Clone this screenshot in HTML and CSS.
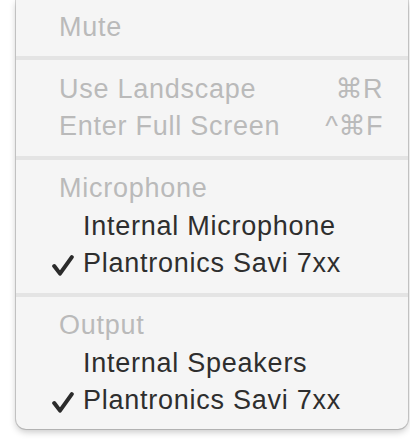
FILE: index.html
```html
<!DOCTYPE html>
<html>
<head>
<meta charset="utf-8">
<link rel="stylesheet" href="styles.css">
</head>
<body>
<div class="menu">
  <div class="row header">Mute</div>
  <div class="sep"></div>
  <div class="row header"><span class="label">Use Landscape</span><span class="key">⌘R</span></div>
  <div class="row header"><span class="label">Enter Full Screen</span><span class="key">^⌘F</span></div>
  <div class="sep"></div>
  <div class="row header">Microphone</div>
  <div class="row item"><span class="check"></span><span class="label">Internal Microphone</span></div>
  <div class="row item"><span class="check"><svg width="22" height="21" viewBox="0 0 22 21"><polyline points="2.2,11 8,18.6 19.8,2.2" fill="none" stroke="#2b2b2b" stroke-width="4" stroke-linecap="round" stroke-linejoin="round"/></svg></span><span class="label">Plantronics Savi 7xx</span></div>
  <div class="sep"></div>
  <div class="row header">Output</div>
  <div class="row item"><span class="check"></span><span class="label">Internal Speakers</span></div>
  <div class="row item"><span class="check"><svg width="22" height="21" viewBox="0 0 22 21"><polyline points="2.2,11 8,18.6 19.8,2.2" fill="none" stroke="#2b2b2b" stroke-width="4" stroke-linecap="round" stroke-linejoin="round"/></svg></span><span class="label">Plantronics Savi 7xx</span></div>
</div>
</body>
</html>
```
FILE: styles.css
```css
html, body {
  margin: 0;
  padding: 0;
  background: #ffffff;
}
body {
  width: 410px;
  height: 446px;
  overflow: hidden;
}
.menu {
  margin-left: 16px;
  width: 392px;
  background: #f5f5f5;
  padding: 8.5px 0 9.5px 0;
  border-radius: 0 0 10px 10px;
  box-shadow: 0 0 0 1px rgba(0, 0, 0, 0.16), 0 3px 7px rgba(0, 0, 0, 0.22);
  font-family: "Liberation Sans", "DejaVu Sans", Arial, sans-serif;
  font-size: 27px;
  letter-spacing: 0.75px;
}
.row {
  display: flex;
  align-items: center;
  height: 37.5px;
  line-height: 37.5px;
  white-space: nowrap;
}
.header {
  color: #bababa;
  padding-left: 43px;
  padding-right: 25px;
}
.item {
  color: #2e2e2e;
  padding-left: 36px;
}
.label {
  flex: 1;
}
.key {
  letter-spacing: 0.5px;
}
.check {
  width: 31px;
  height: 37.5px;
  display: flex;
  align-items: center;
  padding-top: 4px;
  box-sizing: border-box;
}
.check svg {
  display: block;
}
.sep {
  height: 4px;
  margin: 10.25px 0;
  background: #e4e4e4;
}
```
